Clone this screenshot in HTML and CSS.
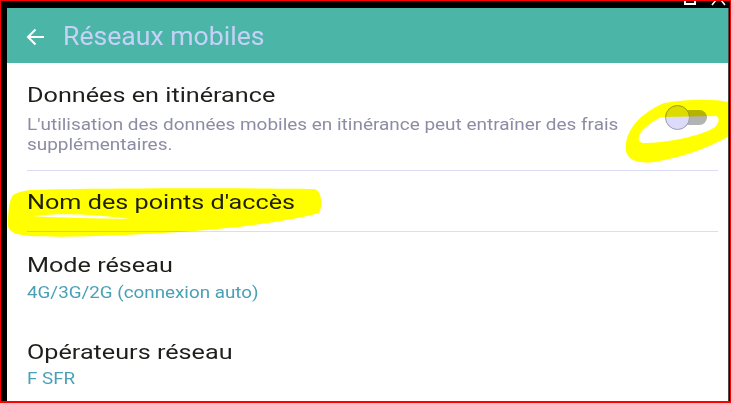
FILE: index.html
```html
<!DOCTYPE html>
<html lang="fr">
<head>
<meta charset="utf-8">
<title>Réseaux mobiles</title>
<link rel="stylesheet" href="styles.css">
</head>
<body>
<div class="frame">
  <div class="winctl">
    <span class="winmax"></span>
    <svg class="winclose" width="20" height="6" viewBox="0 0 20 6"><path d="M5 0 L1 5 M10 0 L14 5" stroke="#fff" stroke-width="1.6" fill="none"/></svg>
  </div>
  <div class="screen">
    <header class="appbar">
      <svg class="back" width="19" height="18" viewBox="0 0 19 18"><path d="M18 9 H2 M9.5 1.5 L2 9 L9.5 16.5" stroke="#fff" stroke-width="2" fill="none"/></svg>
      <h1 class="title">Réseaux mobiles</h1>
    </header>
    <div class="list">
      <div class="item item-roam">
        <div class="text">
          <div class="label">Données en itinérance</div>
          <div class="desc">L'utilisation des données mobiles en itinérance peut entraîner des frais supplémentaires.</div>
        </div>
        <div class="switch"><span class="track"></span><span class="thumb"></span></div>
      </div>
      <div class="divider"></div>
      <div class="item item-apn">
        <div class="label">Nom des points d'accès</div>
      </div>
      <div class="divider"></div>
      <div class="item item-mode">
        <div class="label">Mode réseau</div>
        <div class="value">4G/3G/2G (connexion auto)</div>
      </div>
      <div class="item item-op">
        <div class="label">Opérateurs réseau</div>
        <div class="value">F SFR</div>
      </div>
    </div>
  </div>
  <svg class="marks" width="731" height="403" viewBox="0 0 731 403">
    <path fill="#ffff00" fill-rule="evenodd" d="M664 103 C688 99 714 99 729 102 L729 136 C712 146 690 155 660 161 C640 165 628 161 626 151 C624 136 634 116 664 103 Z M662 117 L716 116 C721 118 719 126 710 130 C695 137 665 143 643 143 C636 142 638 134 645 128 C650 123 656 119 662 117 Z"/>
    <path fill="#ffff00" fill-rule="evenodd" d="M13 195 C18 192 24 191 30 190 C110 188 240 188 314 189 C322 190 323 207 319 213 C290 221 240 228 180 232 C130 235 70 238 30 236 C16 235 9 232 8 226 C8 212 9 200 13 195 Z M32 216 C60 213 95 214 130 219 C95 218 60 218 32 216 Z"/>
  </svg>
</div>
</body>
</html>
```

FILE: styles.css
```css
* { box-sizing: border-box; }

html, body {
  margin: 0;
  padding: 0;
  background: #000;
}

body {
  font-family: Roboto, "Noto Sans", "Liberation Sans", sans-serif;
}

.frame {
  position: relative;
  width: 731px;
  height: 403px;
  background: #000;
  border-top: 1px solid #ff0000;
  border-left: 1px solid #ff0000;
  border-right: 1px solid #ff0000;
  border-bottom: 2px solid #ff0000;
  padding: 7px 2px 0 6px;
  overflow: hidden;
}

.winctl {
  position: absolute;
  top: -1px;
  left: 683px;
  width: 40px;
  height: 6px;
}

.winmax {
  position: absolute;
  left: 0;
  top: -6px;
  width: 12px;
  height: 11px;
  border: 2px solid #fff;
}

.winclose {
  position: absolute;
  left: 27px;
  top: 0;
}

.screen {
  width: 721px;
  height: 393px;
  background: #fff;
  overflow: hidden;
  box-shadow: 1px 0 0 #4a4a4a;
}

.appbar {
  display: flex;
  align-items: center;
  height: 55px;
  padding: 3px 0 0 19px;
  background: #4bb6a8;
  gap: 18px;
}

.back {
  display: block;
  flex: none;
}

.title {
  margin: 0;
  font-weight: 400;
  font-size: 25px;
  line-height: 30px;
  color: #c6d1f8;
  transform: scaleX(1.064);
  transform-origin: left center;
}

.list {
  display: flex;
  flex-direction: column;
}

.item {
  padding-left: 20px;
  padding-right: 21px;
}

.label {
  font-size: 21px;
  line-height: 28px;
  color: #1e1e1a;
  transform: scaleX(1.2);
  transform-origin: left center;
}

.desc {
  max-width: 540px;
  margin-top: 6px;
  font-size: 16px;
  line-height: 20px;
  color: #8c8da4;
  transform: scaleX(1.184);
  transform-origin: left center;
}

.value {
  font-size: 16px;
  line-height: 20px;
  color: #4aa0b5;
  transform: scaleX(1.175);
  transform-origin: left center;
}

.item-roam {
  display: flex;
  align-items: center;
  gap: 20px;
  padding-top: 18px;
  padding-bottom: 15px;
}

.item-roam .text {
  flex: 1;
  min-width: 0;
}

.switch {
  position: relative;
  flex: none;
  width: 42px;
  height: 25px;
  margin-bottom: 2px;
}

.track {
  position: absolute;
  left: 8px;
  right: 0;
  top: 5px;
  height: 15px;
  border-radius: 8px;
  background: #b3b3b3;
}

.thumb {
  position: absolute;
  left: 0;
  top: 0;
  width: 25px;
  height: 25px;
  border-radius: 50%;
  background: #dcdcfa;
  border: 1px solid #9c9cb4;
}

.divider {
  height: 1px;
  margin: 0 10px 0 20px;
  background: #dcdcf4;
}

.item-apn {
  padding-top: 17px;
  padding-bottom: 15px;
}

.item-mode {
  padding-top: 19px;
  padding-bottom: 16px;
}

.item-mode .value { margin-top: 4px; }

.item-op {
  padding-top: 19px;
  padding-bottom: 10px;
}

.item-op .value { margin-top: 3px; }

.marks {
  position: absolute;
  left: -1px;
  top: -1px;
  pointer-events: none;
  mix-blend-mode: multiply;
}
```
